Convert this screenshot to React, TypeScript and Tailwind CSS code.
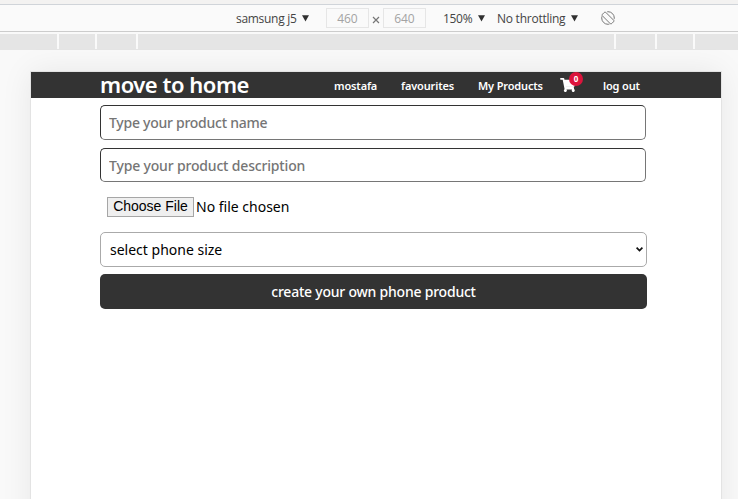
import React from "react";

const uiFont = "font-['Open_Sans','Noto_Sans',sans-serif]";
const siteFont = "font-['Noto_Sans','Open_Sans',sans-serif]";

function Caret() {
  return (
    <svg width="7" height="7" viewBox="0 0 7 7" className="shrink-0">
      <path d="M0 0.2H7L3.5 6.6Z" fill="#303030" />
    </svg>
  );
}

function DeviceToolbar() {
  return (
    <div className={`flex h-7 items-center border-t border-b border-t-[#d0d4d9] border-b-[#cccccc] bg-[#fafafa] pl-[236px] text-[12px] text-[#444] ${uiFont}`}>
      <div className="flex w-[90px] items-center">
        <span className="w-[66px] pt-px whitespace-nowrap tracking-[-0.3px]">samsung j5</span>
        <Caret />
      </div>
      <div className="flex h-5 w-[43px] items-center justify-center border border-[#e6e6e6] pt-px tracking-[-0.1px] text-[#a3a3a3]">460</div>
      <svg width="14" height="20" viewBox="0 0 14 20" className="shrink-0">
        <path d="M4 9L10 15M10 9L4 15" stroke="#777" strokeWidth="1.2" />
      </svg>
      <div className="flex h-5 w-[43px] items-center justify-center border border-[#e6e6e6] pt-px tracking-[-0.1px] text-[#a3a3a3]">640</div>
      <div className="ml-[17px] flex w-[54px] items-center">
        <span className="w-[35px] pt-px tracking-[-0.3px]">150%</span>
        <Caret />
      </div>
      <div className="flex w-[104px] items-center">
        <span className="w-[74px] pt-px whitespace-nowrap tracking-[-0.25px]">No throttling</span>
        <Caret />
      </div>
      <svg width="14" height="14" viewBox="0 0 14 14" fill="none" stroke="#777" className="shrink-0">
        <circle cx="7" cy="7" r="6.3" strokeDasharray="12.8 7" strokeDashoffset="-8.2" />
        <path d="M1.2 4.6L9.4 12.8M4.6 1.2L12.8 9.4M1.2 4.6Q0.9 3.8 1.6 3.1L3.1 1.6Q3.8 0.9 4.6 1.2M9.4 12.8Q10.2 13.1 10.9 12.4L12.4 10.9Q13.1 10.2 12.8 9.4" />
      </svg>
    </div>
  );
}

function Ruler() {
  return (
    <div className="mt-0.5 flex h-4 gap-0.5 border-b border-[#e5e5e5] bg-[#fafafa]">
      <div className="w-[57px] bg-[#e5e5e5]" />
      <div className="w-9 bg-[#e5e5e5]" />
      <div className="w-[39px] bg-[#e5e5e5]" />
      <div className="w-[476px] bg-[#e5e5e5]" />
      <div className="w-[39px] bg-[#e5e5e5]" />
      <div className="w-9 bg-[#e5e5e5]" />
      <div className="flex-1 bg-[#e5e5e5]" />
    </div>
  );
}

function SiteHeader() {
  return (
    <header className="flex h-[26px] items-center bg-[#333] pl-[69px] text-[11px] font-semibold tracking-[-0.15px] text-white">
      <h1 className="w-[234px] pb-0.5 whitespace-nowrap text-[22px] leading-[26px] font-semibold tracking-[-0.48px]">move to home</h1>
      <a className="w-[67px] pt-0.5 whitespace-nowrap">mostafa</a>
      <a className="w-[77px] pt-0.5 whitespace-nowrap">favourites</a>
      <a className="w-[82px] pt-0.5 whitespace-nowrap">My Products</a>
      <a className="relative w-[43px]">
        <svg width="16" height="14" viewBox="0 0 576 512" fill="#fff">
          <path d="M528.12 301.319l47.273-208C578.806 78.301 567.391 64 551.99 64H159.208l-9.166-44.81C147.758 8.021 137.93 0 126.529 0H24C10.745 0 0 10.745 0 24v16c0 13.255 10.745 24 24 24h69.883l70.248 343.435C147.325 417.1 136 435.222 136 456c0 30.928 25.072 56 56 56s56-25.072 56-56c0-15.674-6.447-29.835-16.824-40h209.647C430.447 426.165 424 440.326 424 456c0 30.928 25.072 56 56 56s56-25.072 56-56c0-22.172-12.888-41.332-31.579-50.405l5.517-24.276c3.413-15.018-8.002-29.319-23.403-29.319H218.117l-6.545-32h293.145c11.206 0 20.92-7.754 23.403-18.681z" />
          <path d="M190 300H500V400H205Z" />
        </svg>
        <span className="absolute -top-[6px] left-[9px] flex h-[14px] w-[14px] items-center justify-center rounded-full bg-[#dc143c] text-[8px] font-bold tracking-normal">0</span>
      </a>
      <a className="pt-0.5 whitespace-nowrap">log out</a>
    </header>
  );
}

function ProductForm() {
  const input = "block w-[546px] rounded-[5px] border border-t-[#333] border-l-[#333] border-r-[#767676] border-b-[#767676] px-2 text-[14px] font-medium placeholder:text-[#757575] outline-none";
  return (
    <form className="ml-[69px] w-[547px] pt-[7px]">
      <input className={`${input} h-[35px] tracking-[-0.26px]`} placeholder="Type your product name" />
      <input className={`${input} mt-2 h-[34px] tracking-[-0.17px]`} placeholder="Type your product description" />
      <div className="mt-[15px] ml-[7px] flex h-5 items-center text-[14px] text-black">
        <button type="button" className="mr-[2px] h-5 w-[87px] border border-[#a6a6a6] bg-[#efefef] pb-px font-['Liberation_Sans',sans-serif] text-[14px] leading-[17px] whitespace-nowrap">Choose File</button>
        <span className="pb-0.5 whitespace-nowrap">No file chosen</span>
      </div>
      <div className="mt-[15px] flex h-[35px] items-center justify-between rounded-[5px] border border-[#aaa] pr-[3px] pl-[9px] text-[14px] text-black">
        <span>select phone size</span>
        <svg width="7" height="5" viewBox="0 0 7 5" fill="none" stroke="#111" strokeWidth="1.7">
          <path d="M0.6 0.6L3.5 3.5L6.4 0.6" />
        </svg>
      </div>
      <button type="button" className="mt-[7px] h-[35px] w-full rounded-[5px] bg-[#333] text-[14px] font-medium tracking-[-0.22px] text-white">create your own phone product</button>
    </form>
  );
}

export default function App() {
  return (
    <div className="h-[499px] w-[738px] overflow-hidden bg-[#f9f9f9]">
      <div className="h-1 bg-[#f3f2f1]" />
      <DeviceToolbar />
      <Ruler />
      <main className={`mt-[22px] ml-[31px] h-[600px] w-[690px] bg-white shadow-[0_0_0_1px_#e3e3e3,0_0_30px_rgba(0,0,0,0.08)] ${siteFont}`}>
        <SiteHeader />
        <ProductForm />
      </main>
    </div>
  );
}
